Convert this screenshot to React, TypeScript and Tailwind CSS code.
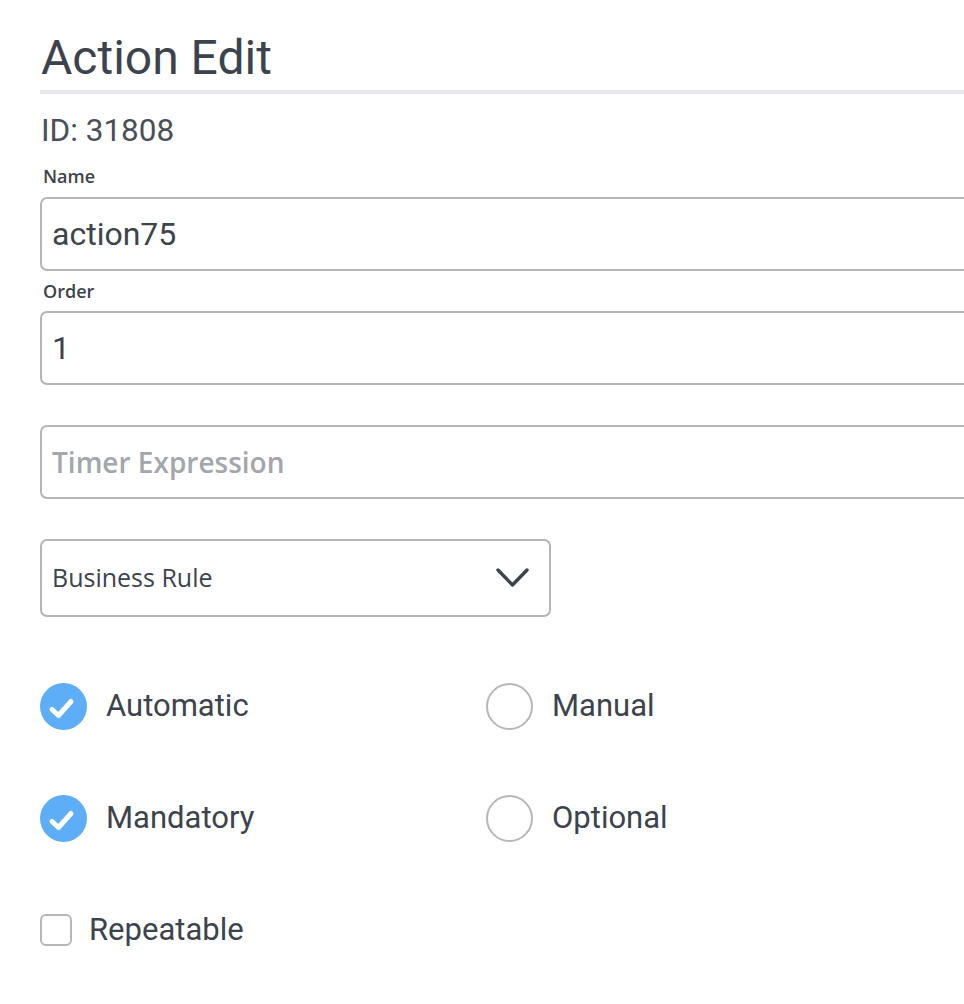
const ink = "text-[#3d434d]"

function FieldLabel({ children }: { children: string }) {
  return (
    <div className={`pl-[3px] font-['Open_Sans',sans-serif] text-[18px] leading-[24px] font-semibold ${ink}`}>
      {children}
    </div>
  )
}

function TextBox({ value, placeholder }: { value?: string; placeholder?: string }) {
  return (
    <div className="flex h-[74px] items-center rounded-[7px] border-2 border-[#b4b5b9] bg-white pl-[10px]">
      {value ? (
        <span className={`font-['Roboto',sans-serif] text-[32px] ${ink}`}>{value}</span>
      ) : (
        <span className="font-['Open_Sans',sans-serif] text-[28px] font-semibold text-[#a3a6ab]">{placeholder}</span>
      )}
    </div>
  )
}

function Choice({ label, checked, square }: { label: string; checked?: boolean; square?: boolean }) {
  return (
    <div className="flex h-[48px] items-center">
      {square ? (
        <span className="h-[32px] w-[32px] rounded-[6px] border-2 border-[#b6b7ba] bg-white" />
      ) : checked ? (
        <svg width="47" height="47" viewBox="0 0 47 47" className="shrink-0">
          <circle cx="23.5" cy="23.5" r="23.5" fill="#5daef6" />
          <path d="M12 26.5 L18.5 32.5 L31 18.5" fill="none" stroke="#fff" strokeWidth="5" strokeLinecap="round" strokeLinejoin="round" />
        </svg>
      ) : (
        <span className="h-[47px] w-[47px] rounded-full border-2 border-[#b6b7ba] bg-white" />
      )}
      <span className={`${square ? "ml-[17px]" : "ml-[19px]"} font-['Roboto',sans-serif] text-[31px] ${ink}`}>{label}</span>
    </div>
  )
}

export default function App() {
  return (
    <div className="min-h-screen w-full overflow-hidden bg-white">
      <div className="w-[1000px] pl-[40px] pt-[28px]">
        <h1 className={`pl-[1px] font-['Roboto',sans-serif] text-[48px] leading-[60px] font-normal ${ink}`}>Action Edit</h1>
        <div className="mt-[2px] h-[4px] bg-[#e5e6e9]" />

        <div className="mt-[19px] pl-[1px] font-['Roboto',sans-serif] text-[31.5px] leading-[36px] text-[#4a4f57]">ID: 31808</div>

        <div className="mt-[15px]">
          <FieldLabel>Name</FieldLabel>
        </div>
        <div className="mt-[9px]">
          <TextBox value="action75" />
        </div>

        <div className="mt-[8px]">
          <FieldLabel>Order</FieldLabel>
        </div>
        <div className="mt-[8px]">
          <TextBox value="1" />
        </div>

        <div className="mt-[40px]">
          <TextBox placeholder="Timer Expression" />
        </div>

        <div className="mt-[40px] flex h-[78px] w-[511px] items-center justify-between rounded-[7px] border-2 border-[#b4b5b9] bg-white pl-[10px] pr-[20px]">
          <span className={`font-['Open_Sans',sans-serif] text-[25px] ${ink}`}>Business Rule</span>
          <svg width="33" height="22" viewBox="0 0 33 22" className="shrink-0">
            <path d="M2 3 L16.5 18 L31 3" fill="none" stroke="#3d434d" strokeWidth="3.4" strokeLinecap="round" strokeLinejoin="round" />
          </svg>
        </div>

        <div className="mt-[65px] grid grid-cols-[446px_1fr] gap-y-[64px]">
          <Choice label="Automatic" checked />
          <Choice label="Manual" />
          <Choice label="Mandatory" checked />
          <Choice label="Optional" />
          <Choice label="Repeatable" square />
        </div>
      </div>
    </div>
  )
}
